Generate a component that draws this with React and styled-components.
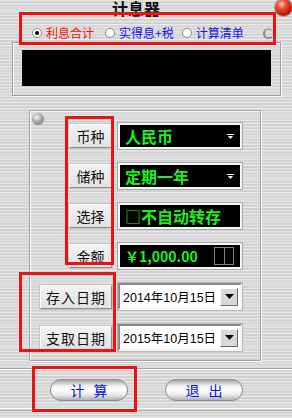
import styled, { createGlobalStyle } from 'styled-components';

const GlobalStyle = createGlobalStyle`
  html, body {
    margin: 0;
    padding: 0;
  }
  body {
    background: #d4d4d4;
    font-family: "Liberation Sans", "Noto Sans CJK SC", sans-serif;
  }
`;

const cjk = `"Noto Sans CJK SC", "Liberation Sans", sans-serif`;

const Window = styled.div`
  position: relative;
  width: 292px;
  height: 418px;
  overflow: hidden;
  background:
    repeating-linear-gradient(180deg, rgba(255,255,255,0.35) 0px, rgba(255,255,255,0.35) 1px, rgba(0,0,0,0) 1px, rgba(0,0,0,0) 3px),
    repeating-linear-gradient(180deg, #d8d8d8 0px, #d8d8d8 2px, #cecece 2px, #cecece 3px, #dcdcdc 3px, #dcdcdc 5px, #d1d1d1 5px, #d1d1d1 7px);
`;

const Header = styled.div`
  height: 24px;
  display: grid;
  grid-template-columns: 1fr auto 1fr;
  padding-right: 20px;
`;

const Title = styled.div`
  grid-column: 2;
  font-family: ${cjk};
  font-size: 16px;
  font-weight: bold;
  line-height: 16px;
  margin-top: 0;
  color: #111;
`;

const CloseBall = styled.div`
  grid-column: 3;
  justify-self: end;
  margin-right: -20px;
  margin-top: -1px;
  width: 17px;
  height: 17px;
  border-radius: 50%;
  background: radial-gradient(circle at 38% 30%, #ffd0c0 0%, #f05a40 25%, #c81e10 60%, #7a0800 100%);
  box-shadow: 0 0 0 1px #9a9a9a;
`;

const RadioRow = styled.div`
  height: 18px;
  display: flex;
  align-items: center;
  padding-left: 32px;
`;

const RadioItem = styled.label`
  display: flex;
  align-items: center;
  gap: 4px;
  margin-right: ${p => p.$after}px;
`;

const RadioDot = styled.span`
  width: 10px;
  height: 10px;
  box-sizing: border-box;
  border-radius: 50%;
  border: 1px solid #8a8a8a;
  background: #fff;
  display: flex;
  align-items: center;
  justify-content: center;
  &::after {
    content: '';
    width: 4px;
    height: 4px;
    border-radius: 50%;
    background: ${p => (p.$checked ? '#000' : 'transparent')};
  }
`;

const RadioText = styled.span`
  font-family: ${cjk};
  font-size: 12px;
  line-height: 14px;
  color: ${p => p.$color};
`;

const Ring = styled.span`
  margin-left: auto;
  margin-right: 18px;
  width: 11px;
  height: 11px;
  box-sizing: border-box;
  border-radius: 50%;
  border: 2px solid #8c8c8c;
  border-right-color: #d8d8d8;
  border-top-color: #a8a8a8;
`;

const Frame = styled.div`
  margin: 0 11px 0 12px;
  height: 54px;
  box-sizing: border-box;
  padding: 7px 9px 9px 9px;
  border: 1px solid #9c9c9c;
  box-shadow: inset 1px 1px 0 #fafafa, 1px 1px 0 #fafafa;
`;

const Display = styled.div`
  height: 36px;
  background: #000;
`;

const Panel = styled.div`
  margin: 14px 31px 0 29px;
  height: 251px;
  box-sizing: border-box;
  padding: 2px 18px 0 0;
  border: 1px solid #a4a4a4;
  box-shadow: inset 1px 1px 0 #fafafa, 1px 1px 0 #fafafa;
`;

const BallRow = styled.div`
  height: 10px;
`;

const Rivet = styled.div`
  margin-left: 2px;
  width: 12px;
  height: 12px;
  border-radius: 50%;
  background: radial-gradient(circle at 40% 35%, #f4f4f4 0%, #a8a8a8 45%, #6a6a6a 100%);
`;

const Rows = styled.div`
  display: flex;
  flex-direction: column;
  gap: 14px;
`;

const Row = styled.div`
  display: flex;
  justify-content: flex-end;
  align-items: center;
  gap: 6px;
  height: ${p => p.$h}px;
`;

const Label = styled.div`
  width: ${p => p.$w}px;
  height: 24px;
  box-sizing: border-box;
  display: flex;
  align-items: center;
  justify-content: center;
  background: linear-gradient(180deg, #f2f2f2, #e2e2e2);
  border: 1px solid;
  border-color: #ffffff #8c8c8c #8c8c8c #ffffff;
  box-shadow: 0 0 0 1px #c4c4c4;
  font-family: ${cjk};
  font-size: 14px;
  letter-spacing: ${p => p.$spacing || 0}px;
  color: #111;
`;

const Combo = styled.div`
  width: 124px;
  height: 26px;
  box-sizing: border-box;
  display: flex;
  align-items: center;
  justify-content: space-between;
  padding: 0 6px 0 5px;
  background: #000;
  border: 2px solid #f4f4f4;
  box-shadow: 0 0 0 1px #a8a8a8;
  color: #1cf01c;
  font-family: ${cjk};
  font-weight: bold;
  font-size: ${p => p.$size || 16}px;
  white-space: nowrap;
`;

const Box = styled.span`
  font-weight: normal;
`;

const Spinner = styled.div`
  width: 20px;
  height: 18px;
  box-sizing: border-box;
  display: grid;
  grid-template-columns: 1fr 1fr;
  border: 1px solid #8c8070;
  & > span + span {
    border-left: 1px solid #8c8070;
  }
`;

const DateField = styled.div`
  width: 124px;
  height: 27px;
  box-sizing: border-box;
  display: flex;
  align-items: center;
  justify-content: space-between;
  padding: 0 2px 0 3px;
  background: #fff;
  border: 2px solid;
  border-color: #8a8a8a #f4f4f4 #f4f4f4 #8a8a8a;
  box-shadow: 0 0 0 1px #b8b8b8;
  font-family: "Liberation Sans", "Noto Sans CJK SC", sans-serif;
  font-size: 12.5px;
  color: #000;
  white-space: nowrap;
`;

const DropBtn = styled.div`
  flex: none;
  width: 18px;
  height: 18px;
  box-sizing: border-box;
  display: flex;
  align-items: center;
  justify-content: center;
  background: #d8d8d8;
  border: 1px solid;
  border-color: #ffffff #6a6a6a #6a6a6a #ffffff;
`;

const Separator = styled.div`
  margin-top: 7px;
  border-top: 1px solid #a4a4a4;
  border-bottom: 1px solid #fafafa;
`;

const ButtonRow = styled.div`
  margin-top: 9px;
  display: flex;
  gap: 37px;
  padding-left: 50px;
`;

const PillButton = styled.button`
  width: 78px;
  height: 22px;
  padding: 0 0 0 3px;
  border-radius: 11px;
  border: 1px solid #8a8a8a;
  background: linear-gradient(180deg, #a4a4a4 0%, #f4f4f4 30%, #ffffff 50%, #e8e8e8 75%, #b0b0b0 100%);
  color: #0010f0;
  font-family: ${cjk};
  font-size: 14px;
  letter-spacing: 3px;
  line-height: 20px;
`;

const BottomLines = styled.div`
  margin-top: 7px;
  height: 1px;
  border-top: 1px solid #fafafa;
  border-bottom: 1px solid #a8a8a8;
`;

const Mark = styled.div`
  position: absolute;
  left: ${p => p.$x}px;
  top: ${p => p.$y}px;
  width: ${p => p.$w}px;
  height: ${p => p.$h}px;
  box-sizing: border-box;
  border: 3px solid #ee1111;
  pointer-events: none;
`;

const WhiteArrow = () => (
  <svg width="7" height="5" viewBox="0 0 7 5">
    <rect x="0" y="0" width="7" height="1" fill="#fff" />
    <polygon points="1,2 6,2 3.5,5" fill="#fff" />
  </svg>
);

const BlackArrow = () => (
  <svg width="9" height="5" viewBox="0 0 9 5">
    <polygon points="0,0 9,0 4.5,5" fill="#000" />
  </svg>
);

const App = () => {
  const radios = [
    { text: '利息合计', color: '#f01010', checked: true, after: 11 },
    { text: '实得息+税', color: '#1010f0', after: 8 },
    { text: '计算清单', color: '#1010f0', after: 0 },
  ];

  return (
    <Window>
      <GlobalStyle />
      <Header>
        <Title>计息器</Title>
        <CloseBall />
      </Header>

      <RadioRow>
        {radios.map(r => (
          <RadioItem key={r.text} $after={r.after}>
            <RadioDot $checked={r.checked} />
            <RadioText $color={r.color}>{r.text}</RadioText>
          </RadioItem>
        ))}
        <Ring />
      </RadioRow>

      <Frame>
        <Display />
      </Frame>

      <Panel>
        <BallRow>
          <Rivet />
        </BallRow>
        <Rows>
          <Row $h={26}>
            <Label $w={43}>币种</Label>
            <Combo>
              人民币
              <WhiteArrow />
            </Combo>
          </Row>
          <Row $h={26}>
            <Label $w={43}>储种</Label>
            <Combo>
              定期一年
              <WhiteArrow />
            </Combo>
          </Row>
          <Row $h={26}>
            <Label $w={43}>选择</Label>
            <Combo>
              <span><Box>□</Box>不自动转存</span>
            </Combo>
          </Row>
          <Row $h={26}>
            <Label $w={43}>金额</Label>
            <Combo $size={14}>
              ￥1,000.00
              <Spinner>
                <span />
                <span />
              </Spinner>
            </Combo>
          </Row>
          <Row $h={27}>
            <Label $w={72} $spacing={1}>存入日期</Label>
            <DateField>
              2014年10月15日
              <DropBtn><BlackArrow /></DropBtn>
            </DateField>
          </Row>
          <Row $h={27}>
            <Label $w={72} $spacing={1}>支取日期</Label>
            <DateField>
              2015年10月15日
              <DropBtn><BlackArrow /></DropBtn>
            </DateField>
          </Row>
        </Rows>
      </Panel>

      <Separator />

      <ButtonRow>
        <PillButton>计 算</PillButton>
        <PillButton>退 出</PillButton>
      </ButtonRow>

      <BottomLines />

      <Mark $x={19} $y={12} $w={257} $h={33} />
      <Mark $x={65} $y={116} $w={49} $h={149} />
      <Mark $x={19} $y={272} $w={97} $h={80} />
      <Mark $x={32} $y={366} $w={105} $h={46} />
    </Window>
  );
};

export default App;
